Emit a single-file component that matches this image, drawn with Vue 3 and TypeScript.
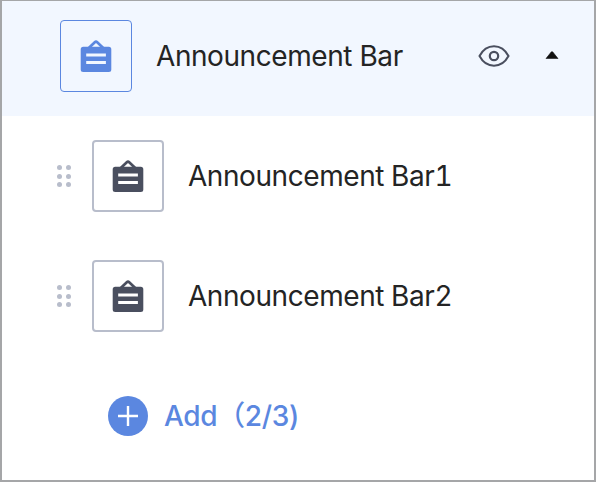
<script setup lang="ts">
import { ref } from 'vue'

interface Block {
  id: number
  title: string
}

const maxBlocks = 3
const expanded = ref(true)
const blocks = ref<Block[]>([
  { id: 1, title: 'Announcement Bar1' },
  { id: 2, title: 'Announcement Bar2' },
])

function addBlock() {
  if (blocks.value.length >= maxBlocks) return
  const id = blocks.value.length + 1
  blocks.value.push({ id, title: `Announcement Bar${id}` })
}
</script>

<template>
  <div class="panel">
    <div class="header">
      <span class="icon-box icon-box--active">
        <svg class="board" viewBox="0 0 32 32">
          <path d="M8.8 8 L14.8 2.3 Q16 1.2 17.2 2.3 L23.2 8" fill="none" stroke="currentColor" stroke-width="2.7" />
          <path
            fill="currentColor"
            fill-rule="evenodd"
            d="M3.2 6.8h25.6a2.5 2.5 0 0 1 2.5 2.5V29.5a2.5 2.5 0 0 1-2.5 2.5H3.2a2.5 2.5 0 0 1-2.5-2.5V9.3a2.5 2.5 0 0 1 2.5-2.5zM6.2 13.5v2.9h19.7v-2.9zM6.2 21.1v2.9h19.7v-2.9z"
          />
        </svg>
      </span>
      <span class="title">Announcement Bar</span>
      <svg class="eye" viewBox="0 0 32 24" fill="none" stroke="currentColor">
        <path d="M1.5 12C5 5.5 10 2.3 16 2.3S27 5.5 30.5 12C27 18.5 22 21.7 16 21.7S5 18.5 1.500 12z" stroke-width="2" />
        <circle cx="16" cy="12" r="4.200" stroke-width="2.200" />
      </svg>
      <button class="toggle" type="button" @click="expanded = !expanded">
        <svg class="caret" :class="{ 'caret--closed': !expanded }" viewBox="0 0 14 8">
          <path d="M1 7.6 L6.2 1 Q7 .2 7.8 1 L13 7.6z" fill="#111" stroke="#111" stroke-width=".6" stroke-linejoin="round" />
        </svg>
      </button>
    </div>

    <template v-if="expanded">
      <div v-for="block in blocks" :key="block.id" class="row">
        <span class="handle">
          <i v-for="n in 6" :key="n" class="handle__dot" />
        </span>
        <span class="icon-box">
          <svg class="board" viewBox="0 0 32 32">
            <path d="M8.8 8 L14.8 2.3 Q16 1.2 17.2 2.3 L23.2 8" fill="none" stroke="currentColor" stroke-width="2.7" />
            <path
              fill="currentColor"
              fill-rule="evenodd"
              d="M3.2 6.8h25.6a2.5 2.5 0 0 1 2.5 2.5V29.5a2.5 2.5 0 0 1-2.5 2.5H3.2a2.5 2.5 0 0 1-2.5-2.5V9.3a2.5 2.5 0 0 1 2.5-2.5zM6.2 13.5v2.9h19.7v-2.9zM6.2 21.1v2.9h19.7v-2.9z"
            />
          </svg>
        </span>
        <span class="title title--row">{{ block.title }}</span>
      </div>

      <button class="add" type="button" @click="addBlock">
        <svg class="add__icon" viewBox="0 0 40 40">
          <circle cx="20" cy="20" r="20" fill="#5b87e0" />
          <path d="M10 20h20M20 10v20" stroke="#fff" stroke-width="2.4" />
        </svg>
        <span class="add__label">Add（{{ blocks.length }}/{{ maxBlocks }})</span>
      </button>
    </template>
  </div>
</template>

<style>
body {
  margin: 0;
}
</style>

<style scoped>
.panel {
  box-sizing: border-box;
  width: 596px;
  height: 482px;
  border: 2px solid #a5a6a8;
  border-top-width: 1px;
  background: #fff;
  color: #242424;
  font-family: Inter, 'Noto Sans CJK SC', sans-serif;
  font-size: 28px;
  line-height: 40px;
}

.header {
  display: flex;
  align-items: center;
  box-sizing: border-box;
  height: 115px;
  padding: 0 26px 5px 58px;
  background: #f2f7ff;
}

.row {
  display: flex;
  align-items: center;
  height: 120px;
  padding-left: 55px;
}

.icon-box {
  display: flex;
  flex: none;
  align-items: center;
  justify-content: center;
  box-sizing: border-box;
  width: 72px;
  height: 72px;
  border: 2px solid #b8bdcb;
  border-radius: 4px;
  color: #4a4f5f;
}

.icon-box--active {
  border: 1px solid #5b87e0;
  color: #5b87e0;
}

.board {
  width: 32px;
  height: 32px;
}

.title {
  margin-left: 24px;
  letter-spacing: -0.43px;
  white-space: nowrap;
}

.title--row {
  font-variant-numeric: tabular-nums;
}

.eye {
  width: 32px;
  height: 24px;
  margin-left: auto;
  color: #4a4f5f;
}

.toggle {
  display: flex;
  align-items: center;
  justify-content: center;
  width: 32px;
  height: 32px;
  margin-left: 26px;
  padding: 0 0 2px;
  border: 0;
  background: none;
  cursor: pointer;
}

.caret {
  width: 14px;
  height: 8px;
}

.caret--closed {
  transform: rotate(180deg);
}

.handle {
  display: grid;
  grid-template-columns: 5px 5px;
  gap: 3.4px;
  margin-right: 21.3px;
  margin-left: 0.3px;
  cursor: grab;
}

.handle__dot {
  width: 5px;
  height: 5px;
  border-radius: 50%;
  background: #b8bdcb;
}

.add {
  display: flex;
  align-items: center;
  gap: 16px;
  height: 120px;
  padding: 0 0 0 106px;
  border: 0;
  background: none;
  color: #5b87e0;
  font: inherit;
  font-weight: 600;
  cursor: pointer;
}

.add__icon {
  width: 40px;
  height: 40px;
}

.add__label {
  font-weight: 500;
  letter-spacing: -0.35px;
}
</style>
